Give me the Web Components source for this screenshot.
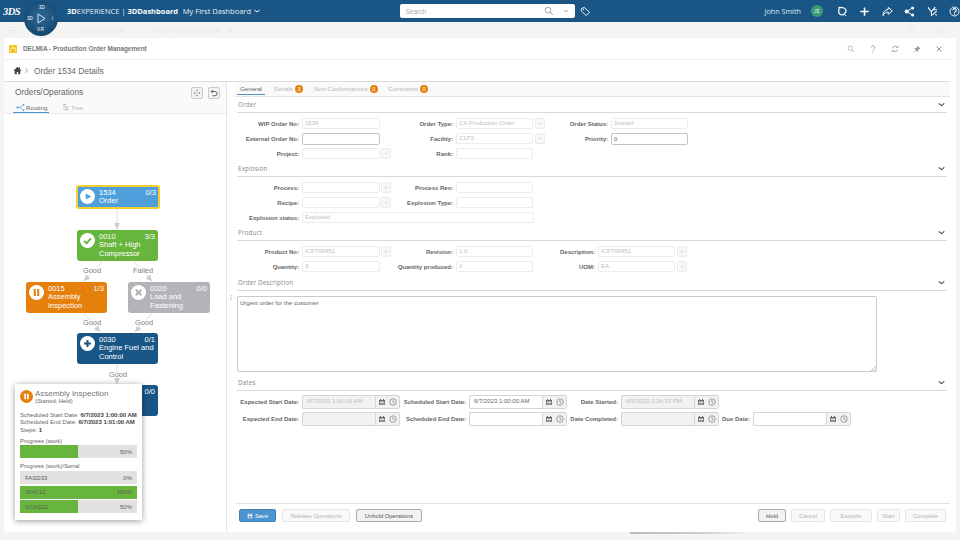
<!DOCTYPE html>
<html>
<head>
<meta charset="utf-8">
<title>Order 1534 Details</title>
<style>
  html, body { margin: 0; height: 100%; background: #f4f4f4; overflow: hidden; }
  body { font-family: "Liberation Sans", Arial, sans-serif; color: #555; }
</style>
</head>
<body>
<app-shell></app-shell>
<script>
const ICONS = {
  search: '<circle cx="6.5" cy="6.5" r="4.5" fill="none" stroke="currentColor" stroke-width="1"/><path d="M10 10l4 4" stroke="currentColor" stroke-width="1.4" fill="none"/>',
  chevron: '<path d="M3 6l5 4 5-4" fill="none" stroke="currentColor" stroke-width="2"/>',
  tag: '<path d="M2 4l4-2 8 7-5 5-7-7z" fill="none" stroke="currentColor" stroke-width="1.3"/><circle cx="5" cy="5" r=".9" fill="currentColor"/>',
  bell: '<path d="M3 2l6 .5c3 1 4.5 3.5 4 6l-4.5 4.5c-2.5.5-5-1-6-3.5z" fill="none" stroke="currentColor" stroke-width="1.7"/><path d="M11 12.5l2 1.5" stroke="currentColor" stroke-width="1.7"/>',
  plus: '<path d="M8 2v12M2 8h12" stroke="currentColor" stroke-width="2.2" fill="none"/>',
  share: '<path d="M9 2l6 5-6 5V9C6 9 3.5 10 1.5 14c0-5 2.5-8.5 7.5-9z" fill="none" stroke="currentColor" stroke-width="1.4"/>',
  network: '<path d="M12 3L4 8l8 5" fill="none" stroke="currentColor" stroke-width="1.3"/><circle cx="4" cy="8" r="3" fill="currentColor"/><circle cx="12.5" cy="3" r="2.2" fill="currentColor"/><circle cx="12.5" cy="13" r="2.2" fill="currentColor"/>',
  tools: '<path d="M1.5 2l5 6.500V14.500M7 7.500L12 1.500M8.500 5.500h6M8 13l6-5.500M10.500 9.500l3.500 4" fill="none" stroke="currentColor" stroke-width="1.600"/>',
  help: '<circle cx="8" cy="8" r="6.5" fill="none" stroke="currentColor" stroke-width="1.3"/><path d="M5.5 6.2c0-3.2 5-3.2 5 0 0 2-2.5 1.8-2.5 3.8" fill="none" stroke="currentColor" stroke-width="1.5"/><circle cx="8" cy="12" r="1" fill="currentColor"/>',
  question: '<path d="M4.500 5c0-4.500 7-4.500 7 0 0 3-3.500 2.800-3.500 6" fill="none" stroke="currentColor" stroke-width="1.500"/><circle cx="8" cy="14" r="1.100" fill="currentColor"/>',
  refresh: '<path d="M3 6.5a5.200 5.200 0 0 1 9-2M13 9.500a5.200 5.200 0 0 1-9 2" fill="none" stroke="currentColor" stroke-width="1.5"/><path d="M10.500 5.500h4v-4zM5.500 10.500h-4v4z" fill="currentColor"/>',
  pin: '<path d="M9 1.5l5.500 5.500-1.500 1-1-.5-2.500 2.500.5 2.500-1 1-6-6 1-1 2.500.5 2.500-2.500-.5-1z" fill="currentColor"/><path d="M5 11l-3.500 3.500" stroke="currentColor" stroke-width="1.2"/>',
  close: '<path d="M3 3l10 10M13 3L3 13" stroke="currentColor" stroke-width="1.8" fill="none"/>',
  home: '<path d="M8 1.5L.8 8.500h2.200V14.500h3.700v-4h2.600v4H13V8.500h2.200L12.500 5.900V2.500h-2v1.500z" fill="currentColor"/>',
  caret: '<path d="M5.5 3l5 5-5 5" fill="none" stroke="currentColor" stroke-width="1.6"/>',
  center: '<path d="M8 1.5l1.800 2.500H6.200zM8 14.500L6.200 12h3.600zM1.500 8L4 6.200v3.600zM14.500 8L12 9.800V6.200z" fill="currentColor"/><circle cx="8" cy="8" r="1" fill="currentColor"/>',
  undo: '<path d="M5.500 2L2.500 5l3 3M2.500 5H10a4 4 0 0 1 0 8.500H5" fill="none" stroke="currentColor" stroke-width="1.800"/>',
  routing: '<path d="M2 8h5l6-5M7 8l6 5" fill="none" stroke="currentColor" stroke-width="1.2"/><circle cx="2.5" cy="8" r="1.8" fill="currentColor"/><circle cx="13.5" cy="3" r="1.5" fill="currentColor"/><circle cx="13.5" cy="13" r="1.5" fill="currentColor"/>',
  tree: '<path d="M2 2h6v2.500H2zM6 7h7v2.500H6zM6 12h7v2.500H6z" fill="currentColor"/><path d="M4 4.500v9h2M4 8h2" fill="none" stroke="currentColor"/>',
  calendar: '<path d="M2 4h12v10H2z" fill="currentColor"/><path d="M3.500 7h9v6h-9z" fill="#f1f1f1"/><path d="M4 2h2v3H4zM10 2h2v3h-2z" fill="currentColor"/><path d="M3.500 9.500h9V13h-9z" fill="currentColor" opacity=".7"/>',
  clock: '<circle cx="8" cy="8" r="6.5" fill="none" stroke="currentColor" stroke-width="1.2"/><path d="M8 4v4.500l3 1.500" fill="none" stroke="currentColor" stroke-width="1.2"/>',
  disk: '<path d="M2 2h9.500L14 4.500V14H2z" fill="currentColor"/><path d="M4.500 8h7v4.500h-7zM5 3h5v2.500H5z" fill="#4d94cf"/>',
  hamburger: '<path d="M1 3h14M1 8h14M1 13h14" stroke="currentColor" stroke-width="1.5"/>',
  play: '<path d="M5.500 3.500l8 4.500-8 4.500z" fill="currentColor"/>',
  check: '<path d="M3 8.500l3.500 3.500L13 5" fill="none" stroke="currentColor" stroke-width="2.8"/>',
  pause: '<path d="M4 3h3v10H4zM9 3h3v10H9z" fill="currentColor"/>',
  cross: '<path d="M4 4l8 8M12 4l-8 8" fill="none" stroke="currentColor" stroke-width="3.2"/>',
  add: '<path d="M8 3v10M3 8h10" fill="none" stroke="currentColor" stroke-width="3"/>',
  delmia: '<path d="M2 13L7 3l2 5 3-3 2 8" fill="none" stroke="currentColor" stroke-width="1.300"/>'
};

function icon(name, size, color) {
  return `<svg width="${size}" height="${size}" viewBox="0 0 16 16" style="color:${color || 'currentColor'};display:block;flex:none">${ICONS[name]}</svg>`;
}

// top blue bar with the compass
class TopBar extends HTMLElement {
  connectedCallback() {
    const root = this.attachShadow({ mode: 'open' });
    root.innerHTML = `
      <style>
        :host { display: flex; align-items: center; height: 22px; background: #1a5685; color: #fff; position: relative; font-family: "Open Sans", sans-serif; flex: none; }
        .logo { font: italic bold 10.5px "Liberation Serif", serif; width: 20px; margin-left: 3px; letter-spacing: -.5px; }
        .compass { position: absolute; left: 24px; top: 1px; width: 34px; height: 35px; border-radius: 50%; background: radial-gradient(circle at 50% 45%, #2d6a98 0, #1b5179 55%, #123c5c 100%); font: 4.5px "Liberation Sans", sans-serif; z-index: 5; }
        .compass span { position: absolute; }
        .brand { margin-left: 44px; font-size: 7.5px; white-space: nowrap; width: 116px; color: #e6eef5; }
        .brand b { color: #fff; }
        .dash { font-size: 7.5px; white-space: nowrap; width: 70px; color: #e6eef5; }
        .search { margin-left: 139px; width: 175px; height: 14px; background: #fff; border-radius: 2px; display: flex; align-items: center; color: #aaa; font: 6.5px "Liberation Sans", sans-serif; box-sizing: border-box; padding-left: 6px; }
        .search span { flex: 1; }
        .user { margin-left: 174px; font-size: 7.2px; width: 46px; white-space: nowrap; color: #dfe9f1; }
        .avatar { width: 12px; height: 12px; border-radius: 50%; background: #3a9a76; font: italic 4.5px "Liberation Sans", sans-serif; display: flex; align-items: center; justify-content: center; margin-right: 14px; }
        .tools { display: flex; gap: 11.5px; align-items: center; }
      </style>
      <span class="logo">3DS</span>
      <div class="compass">
        <span style="left:15px;top:4px">3D</span>
        <span style="left:3px;top:15px">3D</span>
        <span style="left:28px;top:15px">i</span>
        <span style="left:13px;top:26px">V.R</span>
        <svg style="position:absolute;left:12px;top:12px" width="10" height="11" viewBox="0 0 10 11"><path d="M2 1l7 4.500-7 4.500z" fill="none" stroke="#fff" stroke-width=".8"/></svg>
      </div>
      <span class="brand"><b>3D</b>EXPERIENCE | <b>3DDashboard</b></span>
      <span class="dash">My First Dashboard</span>
      ${icon('chevron', 8)}
      <div class="search"><span>Search</span>${icon('search', 10, '#777')}<span style="flex:none;width:9px"></span>${icon('chevron', 6, '#888')}<span style="flex:none;width:6px"></span></div>
      <span style="margin-left:5px">${icon('tag', 11)}</span>
      <span class="user">John Smith</span>
      <span class="avatar">JS</span>
      <div class="tools">${icon('bell', 11)}${icon('plus', 11)}${icon('share', 11)}${icon('network', 11)}${icon('tools', 11)}${icon('help', 11)}</div>`;
  }
}

// faded dashboard tab strip behind the widget
class SubBar extends HTMLElement {
  connectedCallback() {
    const root = this.attachShadow({ mode: 'open' });
    root.innerHTML = `
      <style>
        :host { display: flex; align-items: center; height: 16px; flex: none; color: #e9e9e9; font: 7px "Liberation Sans", sans-serif; padding-left: 7px; box-sizing: border-box; }
        span { white-space: nowrap; }
      </style>
      ${icon('hamburger', 9)}
      <span style="margin-left:61px;width:53px">Getting Started</span>${icon('chevron', 8)}
      <span style="margin-left:16px;width:73px">Learn the Experience</span>${icon('plus', 8)}
      <span style="margin-left:672px;flex:none;display:flex;gap:21px;width:30px">${icon('clock', 9)}${icon('hamburger', 9)}</span>`;
  }
}

class WidgetPanel extends HTMLElement {
  connectedCallback() {
    const root = this.attachShadow({ mode: 'open' });
    root.innerHTML = `
      <style>
        :host { display: flex; flex-direction: column; height: 494px; margin: 0 4px; background: #fff; box-sizing: border-box; padding-right: 6px; position: relative; flex: none; }
        .head { height: 22px; display: flex; align-items: center; border-bottom: 1px solid #eee; box-sizing: border-box; padding-left: 5px; flex: none; }
        .app { width: 8px; height: 8px; background: #f3c21b; border-radius: 1px; margin-right: 6px; flex: none; color: #fff; }
        .title { flex: 1; font: bold 6.4px "Liberation Sans", sans-serif; color: #777; }
        .actions { display: flex; gap: 14px; padding-right: 7px; color: #888; }
        .crumb { height: 22px; display: flex; align-items: center; border-bottom: 1px solid #ddd; box-sizing: border-box; padding-left: 9px; flex: none; color: #666; font: 8.3px "Liberation Sans", sans-serif; }
        .body { flex: 1; display: flex; min-height: 0; }
        .split { width: 9px; flex: none; border-left: 1px solid #e3e3e3; display: flex; align-items: center; justify-content: center; color: #aaa; font: bold 6px "Liberation Sans", sans-serif; padding-bottom: 22px; box-sizing: border-box; }
      </style>
      <div class="head"><span class="app">${icon('delmia', 8)}</span><span class="title">DELMIA - Production Order Management</span>
        <div class="actions">${icon('search', 8)}${icon('question', 8)}${icon('refresh', 8)}${icon('pin', 8)}${icon('close', 8)}</div>
      </div>
      <div class="crumb">${icon('home', 9, '#444')}<span style="margin:0 4px 0 1px">${icon('caret', 7, '#777')}</span>Order 1534 Details</div>
      <div class="body"><slot name="left"></slot><div class="split">⋮</div><slot name="right"></slot></div>`;
  }
}

// left column, with the graph in the default slot
class OrdersPane extends HTMLElement {
  connectedCallback() {
    const root = this.attachShadow({ mode: 'open' });
    root.innerHTML = `
      <style>
        :host { display: flex; flex-direction: column; width: 222px; flex: none; position: relative; font-family: "Liberation Sans", sans-serif; padding-bottom: 6px; box-sizing: border-box; }
        .top { height: 32px; background: #fafafa; border-bottom: 1px solid #e8e8e8; box-sizing: border-box; position: relative; padding: 6px 0 0 11px; flex: none; }
        .title { font-size: 8.3px; color: #666; line-height: 9px; }
        .btns { position: absolute; right: 6px; top: 5px; display: flex; gap: 5px; }
        .btns span { width: 12px; height: 12px; border: 1px solid #ccc; border-radius: 2px; box-sizing: border-box; background: #f2f2f2; display: flex; align-items: center; justify-content: center; color: #555; }
        .tabs { display: flex; gap: 10px; margin-top: 5px; margin-left: -2px; font-size: 6.2px; }
        .tab { display: flex; align-items: center; gap: 1px; height: 10px; padding: 0 3px; box-sizing: border-box; color: #bbb; }
        .tab.on { color: #666; border-bottom: 1px solid #4d94cf; height: 11px; width: 36px; }
      </style>
      <div class="top">
        <div class="title">Orders/Operations</div>
        <div class="btns"><span>${icon('center', 8)}</span><span>${icon('undo', 8)}</span></div>
        <div class="tabs"><span class="tab on">${icon('routing', 9, '#4d94cf')}Routing</span><span class="tab">${icon('tree', 8, '#bbb')}Tree</span></div>
      </div>
      <slot></slot>`;
  }
}

class FlowNode extends HTMLElement {
  connectedCallback() {
    const root = this.attachShadow({ mode: 'open' });
    const a = n => this.getAttribute(n);
    const selected = this.hasAttribute('selected');
    root.innerHTML = `
      <style>
        :host { display: block; position: absolute; left: ${a('x') - 4}px; top: ${a('y') - 115}px; width: ${a('w') || 81}px; height: ${a('h') || 31}px; background: ${a('color')}; border-radius: 3px; color: #fff; font: 7.5px/8.3px "Liberation Sans", sans-serif; box-sizing: border-box; padding: ${selected ? '2px 0 0 21px' : '3px 0 0 22px'}; ${selected ? 'border: 2px solid #f2cd2e;' : ''} }
        .ico { position: absolute; left: ${selected ? 2 : 3}px; top: ${selected ? 2 : 3}px; width: 15px; height: 15px; border-radius: 50%; background: #fff; display: flex; align-items: center; justify-content: center; }
        .count { position: absolute; right: ${selected ? 2 : 3}px; top: ${selected ? 2 : 3}px; }
      </style>
      <span class="ico">${icon(a('icon'), 11, a('color'))}</span>
      <span class="count">${a('count')}</span>
      <div><slot></slot></div>`;
  }
}

// the routing diagram; nodes are placed by page coordinates
class FlowGraph extends HTMLElement {
  connectedCallback() {
    const root = this.attachShadow({ mode: 'open' });
    const edges = [[117, 210, 117, 230], [102, 263, 84, 282], [134, 263, 152, 282], [84, 314, 100, 333], [152, 314, 135, 333], [117, 365, 117, 385]];
    const labels = [['Good', 92, 271], ['Failed', 143, 271], ['Good', 92, 323], ['Good', 144, 323], ['Good', 118, 375]];
    const arrows = edges.map(([x1, y1, x2, y2]) => {
      const ang = Math.atan2(y2 - y1, x2 - x1) * 180 / Math.PI;
      return `<line x1="${x1}" y1="${y1}" x2="${x2}" y2="${y2}" stroke="#ddd" stroke-width="1"/>
        <path d="M0 0L-6 -3V3z" fill="#ccc" transform="translate(${x2} ${y2}) rotate(${ang})"/>`;
    }).join('');
    const texts = labels.map(([t, x, y]) => `<text x="${x}" y="${y + 2.5}" text-anchor="middle" font-size="7.4" font-family="Liberation Sans" fill="#808080" stroke="#fff" stroke-width="2" paint-order="stroke">${t}</text>`).join('');
    root.innerHTML = `
      <style>
        :host { display: block; position: relative; flex: 1; }
        svg { position: absolute; left: 0; top: 0; }
      </style>
      <svg width="222" height="405" viewBox="4 115 222 405">${arrows}${texts}</svg>
      <slot></slot>`;
  }
}

class ProgressBar extends HTMLElement {
  connectedCallback() {
    const root = this.attachShadow({ mode: 'open' });
    const pct = this.getAttribute('value');
    root.innerHTML = `
      <style>
        :host { display: flex; justify-content: space-between; align-items: center; height: 13px; padding: 0 5px; box-sizing: border-box; font: 6px "Liberation Sans", sans-serif; color: #5c5c5c;
          background: linear-gradient(to right, #68b53e ${pct}%, #e2e2e2 ${pct}%); }
      </style>
      <span>${this.getAttribute('label') || ''}</span><span>${pct}%</span>`;
  }
}

class OpPopup extends HTMLElement {
  connectedCallback() {
    const root = this.attachShadow({ mode: 'open' });
    root.innerHTML = `
      <style>
        :host { display: block; position: absolute; left: 11px; top: 302px; width: 127px; height: 136px; background: #fff; box-shadow: 0 1px 6px rgba(0,0,0,.4); box-sizing: border-box; padding: 5px 5px 0; font: 6px "Liberation Sans", sans-serif; color: #666; }
        .head { display: flex; gap: 2px; height: 20px; }
        .ico { width: 13px; height: 13px; border-radius: 50%; background: #e5800d; color: #fff; display: flex; align-items: center; justify-content: center; margin-top: 1px; flex: none; }
        .name { font-size: 8px; line-height: 9px; color: #777; }
        .state { font-size: 5.8px; line-height: 7px; }
        .lines { line-height: 7.4px; margin-top: 3px; white-space: nowrap; height: 25px; }
        b { color: #444; }
        .cap { line-height: 8px; height: 8px; }
        .gap { height: 4px; }
        .rows { display: flex; flex-direction: column; gap: 1.5px; margin-top: 1px; }
      </style>
      <div class="head"><span class="ico">${icon('pause', 9)}</span><div><div class="name">Assembly Inspection</div><div class="state">(Started, Held)</div></div></div>
      <div class="lines">Scheduled Start Date: <b>6/7/2023 1:00:00 AM</b><br>Scheduled End Date: <b>6/7/2023 1:01:00 AM</b><br>Steps: <b>1</b></div>
      <div class="cap">Progress (work)</div>
      <progress-bar value="50"></progress-bar>
      <div class="gap"></div>
      <div class="cap">Progress (work)/Serial</div>
      <div class="rows">
        <progress-bar label="FASD33" value="0"></progress-bar>
        <progress-bar label="JK4712" value="100"></progress-bar>
        <progress-bar label="SCAS22" value="50"></progress-bar>
      </div>`;
  }
}

class DetailTabs extends HTMLElement {
  connectedCallback() {
    const root = this.attachShadow({ mode: 'open' });
    const tab = (name, n, w) => `<span class="tab" style="width:${w}px">${name}<i>${n}</i></span>`;
    root.innerHTML = `
      <style>
        :host { display: flex; height: 15px; background: #fafafa; flex: none; font: 6.2px "Liberation Sans", sans-serif; box-sizing: border-box; padding-left: 2px; color: #b5b5b5; border-bottom: 1px solid #e3e3e3; }
        .tab { display: flex; align-items: center; gap: 2px; height: 13px; white-space: nowrap; }
        .on { color: #666; width: 28px; border-bottom: 1px solid #4d94cf; justify-content: center; height: 13px; margin-right: 9px; box-sizing: border-box; }
        i { font-style: normal; width: 8px; height: 8px; border-radius: 50%; background: #e5800d; color: #fff; font-size: 5.5px; display: flex; align-items: center; justify-content: center; }
      </style>
      <span class="tab on">General</span>
      ${tab('Serials', 3, 40)}${tab('Non-Conformances', 0, 74)}${tab('Comments', 0, 40)}`;
  }
}

class FormSection extends HTMLElement {
  connectedCallback() {
    const root = this.attachShadow({ mode: 'open' });
    root.innerHTML = `
      <style>
        :host { display: block; flex: none; }
        .head { height: 16px; border-bottom: 1px solid #d9d9d9; box-sizing: border-box; display: flex; align-items: center; justify-content: space-between; margin: 0 3px 0 2px; padding: 0 1px; font: 6.2px "Open Sans", sans-serif; letter-spacing: .2px; color: #888; }
        .rows { display: flex; flex-direction: column; padding: var(--rows-pad, 3px 0 0 2px); }
      </style>
      <div class="head"><span>${this.getAttribute('title')}</span>${icon('chevron', 9, '#444')}</div>
      <div class="rows"><slot></slot></div>`;
  }
}

class FormRow extends HTMLElement {
  connectedCallback() {
    const root = this.attachShadow({ mode: 'open' });
    root.innerHTML = `<style>:host { display: flex; height: ${this.getAttribute('h') || 15}px; align-items: center; }</style><slot></slot>`;
  }
}

class FormField extends HTMLElement {
  connectedCallback() {
    const root = this.attachShadow({ mode: 'open' });
    const a = n => this.getAttribute(n);
    const on = this.hasAttribute('enabled');
    root.innerHTML = `
      <style>
        :host { display: flex; align-items: center; flex: none; font: 6px "Liberation Sans", sans-serif; }
        label { width: ${a('lw')}px; text-align: right; font-weight: bold; color: #666; margin-right: 3px; white-space: nowrap; }
        .box { width: ${a('w') || 78}px; height: ${on ? 12 : 11}px; border: 1px solid ${on ? '#c4c4c4' : '#ececec'}; border-radius: 2px; box-sizing: border-box; padding-left: 2px; line-height: ${on ? 10 : 9}px; color: ${on ? '#666' : '#c0c0c0'}; white-space: nowrap; overflow: hidden; }
        .lookup { width: 10px; height: 11px; margin-left: ${a('look-gap') || 1}px; border: 1px solid #ececec; background: #f7f7f7; border-radius: 2px; box-sizing: border-box; color: #bbb; text-align: center; line-height: 8px; }
        .none { width: 11px; }
      </style>
      <label>${a('label')}</label><div class="box">${a('value') || ''}</div>${this.hasAttribute('lookup') ? '<div class="lookup">–</div>' : (a('w') ? '' : '<div class="none"></div>')}`;
  }
}

class DateField extends HTMLElement {
  connectedCallback() {
    const root = this.attachShadow({ mode: 'open' });
    const a = n => this.getAttribute(n);
    const on = this.hasAttribute('enabled');
    root.innerHTML = `
      <style>
        :host { display: flex; align-items: center; flex: none; font: 6px "Liberation Sans", sans-serif; }
        label { width: ${a('lw')}px; text-align: right; font-weight: bold; color: #666; margin-right: 3px; white-space: nowrap; }
        .box { width: 73px; height: 14px; border: 1px solid #d4d4d4; border-right: 0; border-radius: 2px 0 0 2px; box-sizing: border-box; padding-left: 4px; line-height: 11px; background: ${on ? '#fff' : '#f2f2f2'}; color: ${on ? '#666' : '#bdbdbd'}; white-space: nowrap; }
        .add { width: 25px; height: 14px; border: 1px solid #d4d4d4; border-radius: 0 2px 2px 0; box-sizing: border-box; background: #f1f1f1; display: flex; align-items: center; gap: 3px; padding-left: 2px; color: #666; }
      </style>
      <label>${a('label')}</label><div class="box">${a('value') || ''}</div><div class="add">${icon('calendar', 8)}${icon('clock', 8)}</div>`;
  }
}

class ActionButton extends HTMLElement {
  connectedCallback() {
    const root = this.attachShadow({ mode: 'open' });
    const kind = this.getAttribute('kind') || 'off';
    const look = {
      primary: 'background:#4d94cf;border-color:#3f83bb;color:#fff;',
      on: 'background:#f2f2f2;border-color:#aaa;color:#555;',
      off: 'background:#f9f9f9;border-color:#e6e6e6;color:#b5b5b5;'
    }[kind];
    root.innerHTML = `
      <style>
        :host { display: flex; align-items: center; justify-content: center; gap: 2px; height: 13px; width: ${this.getAttribute('w')}px; box-sizing: border-box; border: 1px solid; border-radius: 2px; font: 5.8px "Liberation Sans", sans-serif; ${look} flex: none; }
      </style>
      ${kind === 'primary' ? icon('disk', 6, '#fff') : ''}<slot></slot>`;
  }
}

class DetailsPane extends HTMLElement {
  connectedCallback() {
    const root = this.attachShadow({ mode: 'open' });
    root.innerHTML = `
      <style>
        :host { display: flex; flex-direction: column; flex: 1; min-width: 0; }
        .desc { margin: 5px 0 3px 2px; width: 640px; height: 76px; border: 1px solid #c9c9c9; border-radius: 2px; box-sizing: border-box; padding: 3px 2px; font: 6px "Liberation Sans", sans-serif; color: #666; position: relative; flex: none; }
        .desc svg { position: absolute; right: 0; bottom: 0; }
        .grow { flex: 1; }
        .foot { flex: none; height: 29px; border-top: 1px solid #e3e3e3; box-sizing: border-box; display: flex; align-items: flex-start; padding: 5px 4px 0 4px; gap: 6px; }
        .rgt { margin-left: auto; display: flex; gap: 5px; }
      </style>
      <detail-tabs></detail-tabs>
      <form-section title="Order">
        <form-row><form-field lw="62" label="WIP Order No:" value="1534"></form-field><form-field lw="62" w="77" label="Order Type:" value="CA Production Order" lookup look-gap="2"></form-field><form-field lw="63" w="77" label="Order Status:" value="Started"></form-field></form-row>
        <form-row><form-field lw="62" label="External Order No:" enabled></form-field><form-field lw="62" w="77" label="Facility:" value="C1P2" lookup look-gap="2"></form-field><form-field lw="63" w="77" label="Priority:" value="0" enabled></form-field></form-row>
        <form-row><form-field lw="62" w="78" label="Project:" lookup></form-field><form-field lw="62" w="77" label="Rank:"></form-field></form-row>
      </form-section>
      <form-section title="Explosion">
        <form-row><form-field lw="62" w="78" label="Process:" lookup></form-field><form-field lw="62" w="77" label="Process Rev:"></form-field></form-row>
        <form-row><form-field lw="62" w="78" label="Recipe:" lookup></form-field><form-field lw="62" w="77" label="Explosion Type:"></form-field></form-row>
        <form-row><form-field lw="62" w="232" label="Explosion status:" value="Exploded"></form-field></form-row>
      </form-section>
      <form-section title="Product">
        <form-row><form-field lw="62" w="78" label="Product No:" value="ICFT00451" lookup></form-field><form-field lw="62" w="77" label="Revision:" value="1.0"></form-field><form-field lw="62" w="77" label="Description:" value="ICFT00451" lookup look-gap="2"></form-field></form-row>
        <form-row><form-field lw="62" label="Quantity:" value="3"></form-field><form-field lw="62" w="77" label="Quantity produced:" value="0"></form-field><form-field lw="62" w="77" label="UOM:" value="EA" lookup look-gap="2"></form-field></form-row>
      </form-section>
      <form-section title="Order Description" style="--rows-pad:0;margin-top:1px">
        <div class="desc">Urgent order for the customer<svg width="5" height="5" viewBox="0 0 5 5"><path d="M0 5l5-5M2.5 5L5 2.500" stroke="#999" stroke-width=".6"/></svg></div>
      </form-section>
      <form-section title="Dates" style="--rows-pad:2px 0 0 2px">
        <form-row h="17.5"><date-field lw="62" label="Expected Start Date:" value="6/7/2023 1:00:00 AM"></date-field><date-field lw="66" label="Scheduled Start Date:" value="6/7/2023 1:00:00 AM" enabled></date-field><date-field lw="51" label="Date Started:" value="6/5/2023 2:26:33 PM"></date-field></form-row>
        <form-row h="17.5"><date-field lw="62" label="Expected End Date:"></date-field><date-field lw="66" label="Scheduled End Date:" enabled></date-field><date-field lw="51" label="Date Completed:"></date-field><date-field lw="31" label="Due Date:" enabled></date-field></form-row>
      </form-section>
      <div class="grow"></div>
      <div class="foot">
        <action-button kind="primary" w="37">Save</action-button>
        <action-button w="68">Release Operations</action-button>
        <action-button kind="on" w="66">Unhold Operations</action-button>
        <div class="rgt">
          <action-button kind="on" w="28">Hold</action-button>
          <action-button w="34">Cancel</action-button>
          <action-button w="42">Explode</action-button>
          <action-button w="23">Start</action-button>
          <action-button w="41">Complete</action-button>
        </div>
      </div>`;
  }
}

class AppShell extends HTMLElement {
  connectedCallback() {
    const root = this.attachShadow({ mode: 'open' });
    root.innerHTML = `
      <style>
        :host { display: flex; flex-direction: column; width: 960px; height: 540px; position: relative; overflow: hidden; }
        .drag { position: absolute; left: 630px; top: 532px; width: 120px; height: 2px; background: linear-gradient(to right, #bbb, #ccc 60%, transparent); }
      </style>
      <top-bar></top-bar>
      <sub-bar></sub-bar>
      <widget-panel>
        <orders-pane slot="left">
          <flow-graph>
            <flow-node x="76" y="186" w="84" h="24" color="#4f9fdc" icon="play" count="0/3" selected>1534<br>Order</flow-node>
            <flow-node x="77" y="231" color="#68b53e" icon="check" count="3/3">0010<br>Shaft + High<br>Compressor</flow-node>
            <flow-node x="26" y="283" color="#e5800d" icon="pause" count="1/3">0015<br>Assembly<br>Inspection</flow-node>
            <flow-node x="128" y="283" w="82" color="#b4b4b8" icon="cross" count="0/0">0020<br>Load and<br>Fastening</flow-node>
            <flow-node x="77" y="334" color="#1a5685" icon="add" count="0/1">0030<br>Engine Fuel and<br>Control</flow-node>
            <flow-node x="77" y="386" color="#1a5685" icon="add" count="0/0"></flow-node>
          </flow-graph>
          <op-popup></op-popup>
        </orders-pane>
        <details-pane slot="right"></details-pane>
      </widget-panel>
      <div class="drag"></div>`;
  }
}

customElements.define('top-bar', TopBar);
customElements.define('sub-bar', SubBar);
customElements.define('widget-panel', WidgetPanel);
customElements.define('orders-pane', OrdersPane);
customElements.define('flow-node', FlowNode);
customElements.define('flow-graph', FlowGraph);
customElements.define('progress-bar', ProgressBar);
customElements.define('op-popup', OpPopup);
customElements.define('detail-tabs', DetailTabs);
customElements.define('form-section', FormSection);
customElements.define('form-row', FormRow);
customElements.define('form-field', FormField);
customElements.define('date-field', DateField);
customElements.define('action-button', ActionButton);
customElements.define('details-pane', DetailsPane);
customElements.define('app-shell', AppShell);
</script>
</body>
</html>
